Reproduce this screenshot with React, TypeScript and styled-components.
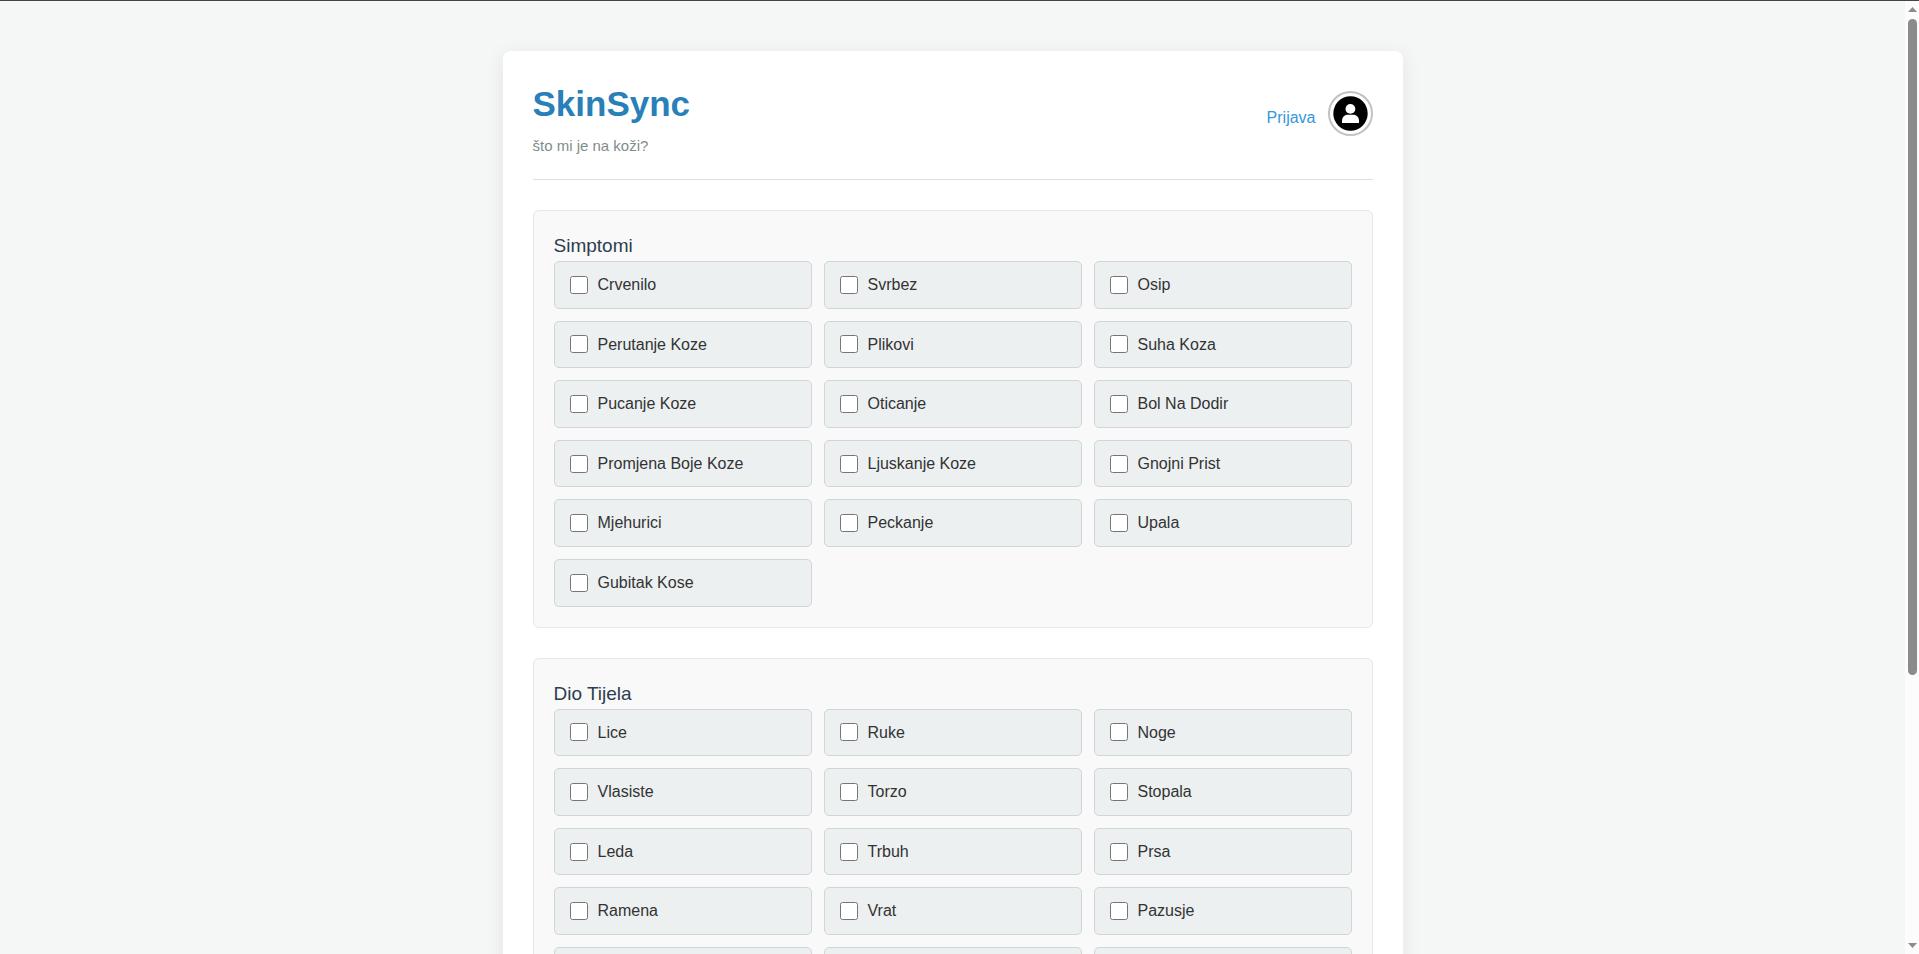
import React, { useId } from "react";
import styled, { createGlobalStyle } from "styled-components";

const GlobalStyle = createGlobalStyle`
  *, *::before, *::after { box-sizing: border-box; }
  body {
    margin: 0;
    font-family: Arial, "Liberation Sans", sans-serif;
    font-size: 16px;
    line-height: 1.6;
    color: #333;
    background: #f4f7f6;
  }
  h1, h2, p { margin: 0; }
`;

const Frame = styled.div`
  display: flex;
  height: 100vh;
  border-top: 1px solid #444;
  overflow: hidden;
`;

const Viewport = styled.div`
  flex: 1;
  min-width: 0;
  overflow-y: auto;
  scrollbar-width: none;
  padding: 50px 20px;
`;

const Rail = styled.div`
  display: flex;
  flex-direction: column;
  align-items: center;
  justify-content: space-between;
  width: 14px;
  padding: 6px 0;
  background: #fcfcfc;
`;

const Arrow = styled.svg`
  display: block;
  width: 9px;
  height: 5px;
  fill: #8b8b8b;
`;

const Track = styled.div`
  flex: 1;
  width: 9px;
  margin: 7px 0 0;
`;

const Thumb = styled.div`
  height: 71%;
  border-radius: 5px;
  background: #8b8b8b;
`;

const Card = styled.main`
  max-width: 900px;
  margin: 0 auto;
  padding: 30px;
  border-radius: 8px;
  background: #fff;
  box-shadow: 0 4px 20px rgba(0, 0, 0, 0.08);
`;

const Header = styled.header`
  display: flex;
  justify-content: space-between;
  align-items: flex-start;
  padding-bottom: 22px;
  margin-bottom: 30px;
  border-bottom: 1px solid #d9dee0;
`;

const Brand = styled.h1`
  margin-bottom: 8px;
  font-size: 35px;
  line-height: 46px;
  font-weight: 700;
  color: #2980b9;
`;

const Tagline = styled.p`
  font-size: 15px;
  line-height: 22px;
  color: #7f8c8d;
`;

const Account = styled.nav`
  display: flex;
  align-items: center;
  gap: 12px;
  margin-top: 10px;
`;

const LoginLink = styled.a`
  padding-top: 8px;
  color: #3498db;
  text-decoration: none;
`;

const AvatarLink = styled.a`
  display: block;
  width: 45px;
  height: 45px;
  padding: 3px;
  border: 2px solid #bdc3c7;
  border-radius: 50%;

  svg { display: block; }
`;

const Panel = styled.section`
  margin-bottom: 30px;
  padding: 20px;
  border: 1px solid #e5e8e8;
  border-radius: 6px;
  background: #f9f9f9;
`;

const PanelTitle = styled.h2`
  font-size: 19px;
  line-height: 30px;
  font-weight: 400;
  color: #2c3e50;
`;

const Options = styled.div`
  display: grid;
  grid-template-columns: repeat(auto-fill, minmax(200px, 1fr));
  gap: 12px;
`;

const Option = styled.label`
  display: flex;
  align-items: center;
  gap: 10px;
  min-height: 47px;
  padding: 10px 15px;
  border: 1px solid #d0d6d8;
  border-radius: 5px;
  background: #ecf0f1;
  cursor: pointer;
`;

const Checkbox = styled.input`
  width: 18px;
  height: 18px;
  margin: 0;
`;

const symptoms = [
  "Crvenilo", "Svrbez", "Osip",
  "Perutanje Koze", "Plikovi", "Suha Koza",
  "Pucanje Koze", "Oticanje", "Bol Na Dodir",
  "Promjena Boje Koze", "Ljuskanje Koze", "Gnojni Prist",
  "Mjehurici", "Peckanje", "Upala",
  "Gubitak Kose",
];

const bodyParts = [
  "Lice", "Ruke", "Noge",
  "Vlasiste", "Torzo", "Stopala",
  "Leda", "Trbuh", "Prsa",
  "Ramena", "Vrat", "Pazusje",
];

interface CheckGroupProps {
  title: string;
  name: string;
  items: string[];
  /** Number of further options that have no name yet. */
  unnamed?: number;
}

function CheckGroup({ title, name, items, unnamed = 0 }: CheckGroupProps) {
  const id = useId();
  return (
    <Panel role="group" aria-labelledby={id}>
      <PanelTitle id={id}>{title}</PanelTitle>
      <Options>
        {items.map((item) => (
          <Option key={item}>
            <Checkbox type="checkbox" name={name} value={item} />
            {item}
          </Option>
        ))}
        {Array.from({ length: unnamed }, (_, i) => (
          <Option key={i}>
            <Checkbox type="checkbox" name={name} aria-label={`${title} ${items.length + i + 1}`} />
          </Option>
        ))}
      </Options>
    </Panel>
  );
}

function Avatar() {
  return (
    <svg width="35" height="35" viewBox="0 0 35 35" aria-hidden="true">
      <circle cx="17.5" cy="17.5" r="17.2" fill="#000" />
      <circle cx="17.4" cy="12.9" r="4.9" fill="#fff" />
      <path d="M9 27v-2.3c0-3.4 2.5-6 5.7-6h5.6c3.2 0 5.7 2.6 5.7 6V27z" fill="#fff" />
    </svg>
  );
}

export default function App() {
  return (
    <>
      <GlobalStyle />
      <Frame>
        <Viewport>
          <Card>
            <Header>
              <div>
                <Brand>SkinSync</Brand>
                <Tagline>što mi je na koži?</Tagline>
              </div>
              <Account>
                <LoginLink href="#prijava">Prijava</LoginLink>
                <AvatarLink href="#profil" aria-label="Profil">
                  <Avatar />
                </AvatarLink>
              </Account>
            </Header>
            <CheckGroup title="Simptomi" name="simptomi" items={symptoms} />
            <CheckGroup title="Dio Tijela" name="dio-tijela" items={bodyParts} unnamed={3} />
          </Card>
        </Viewport>
        <Rail aria-hidden="true">
          <Arrow viewBox="0 0 9 5"><path d="M4.5 0L9 5H0z" /></Arrow>
          <Track><Thumb /></Track>
          <Arrow viewBox="0 0 9 5"><path d="M0 0h9L4.5 5z" /></Arrow>
        </Rail>
      </Frame>
    </>
  );
}
